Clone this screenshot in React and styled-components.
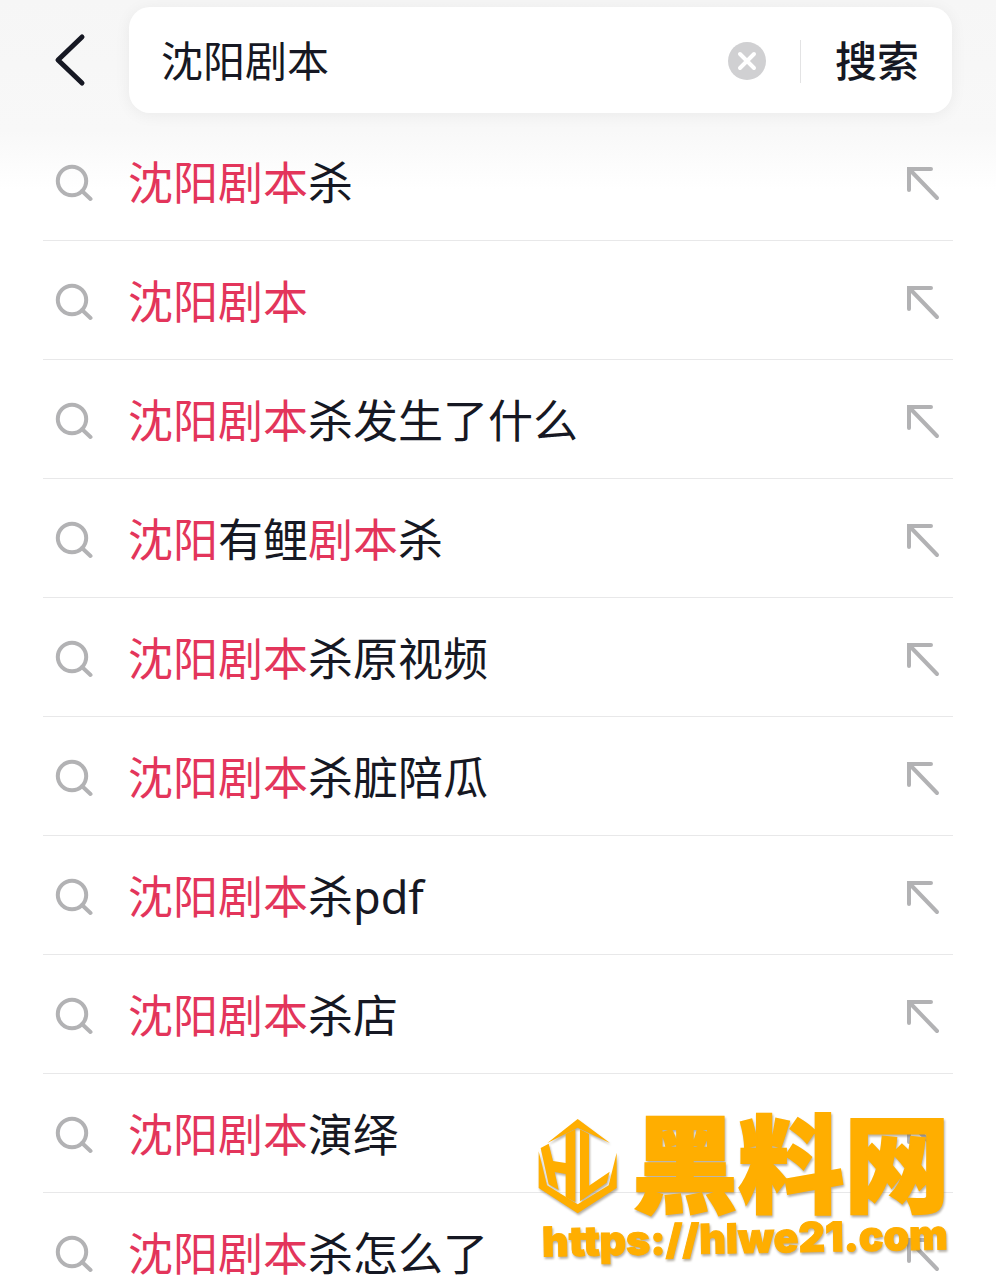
import React, {useState} from 'react';
import styled, {createGlobalStyle} from 'styled-components'

const GlobalStyle = createGlobalStyle`
    * {box-sizing: border-box}

    body {
        margin: 0;
        background: #fff;
        color: #161823;
        font-family: "Noto Sans", "Noto Sans CJK SC", sans-serif;
    }

    button, input {font-family: inherit; color: inherit}
`;

const Page = styled.div`
    position: relative;
    height: 100vh;
    overflow: hidden;
    background: linear-gradient(#f6f6f6, #f8f8f8 130px, #fff 190px);
`;

const Header = styled.header`
    display: flex;
    align-items: flex-start;
    height: 122px;
    padding: 7px 44px 0 48px;
`;

const IconButton = styled.button`
    display: flex;
    flex-shrink: 0;
    padding: 0;
    border: none;
    background: none;
    cursor: pointer;
`;

const BackButton = styled(IconButton)`
    width: 81px;
    height: 106px;
    align-items: center;
`;

const SearchBox = styled.form`
    display: flex;
    flex: 1;
    align-items: center;
    height: 106px;
    padding: 2px 33px 0 32px;
    border-radius: 21px;
    background: #fff;
    box-shadow: 0 2px 16px rgba(0, 0, 0, 0.06);
`;

const SearchInput = styled.input`
    flex: 1;
    min-width: 0;
    height: 64px;
    padding: 0 0 6px;
    border: none;
    outline: none;
    background: none;
    font-size: 42px;
`;

const Divider = styled.span`
    width: 1px;
    height: 43px;
    margin: 0 34px;
    background: #e3e3e4;
`;

const SubmitButton = styled.button`
    padding: 0;
    border: none;
    background: none;
    font-size: 42px;
    line-height: 64px;
    font-weight: 500;
    cursor: pointer;
`;

const List = styled.ul`
    margin: 0;
    padding: 0 43px;
    list-style: none;
`;

const Row = styled.li`
    display: flex;
    align-items: center;
    height: 119px;
    padding: 4px 12px 0;
    border-bottom: 1px solid #e8e8e9;
`;

const RowLink = styled.a`
    display: flex;
    flex: 1;
    align-items: center;
    gap: 35px;
    color: inherit;
    font-size: 45px;
    line-height: 56px;
    text-decoration: none;
    white-space: nowrap;
`;

const Match = styled.span`
    color: #e3355b;
`;

const Watermark = styled.a`
    position: absolute;
    right: 46px;
    bottom: 18px;
    display: flex;
    flex-direction: column;
    color: #ffae00;
    text-decoration: none;
    filter: drop-shadow(1px 2px 1px rgba(90, 80, 60, 0.45));
`;

const Brand = styled.div`
    display: flex;
    align-items: flex-start;
    gap: 14px;
    height: 96px;
`;

const BrandName = styled.span`
    font-family: "Noto Sans CJK SC", sans-serif;
    font-size: 106px;
    line-height: 80px;
    font-weight: 900;
    -webkit-text-stroke: 2px #ffae00;
    white-space: nowrap;
`;

const BrandUrl = styled.span`
    padding-left: 4px;
    font-family: Inter, sans-serif;
    font-size: 41px;
    line-height: 48px;
    font-weight: 900;
    -webkit-text-stroke: 1px #ffae00;
    white-space: nowrap;
    transform: rotate(-1deg);
`;

// matched parts are wrapped in [ ]
const suggestions = [
    '[沈阳剧本]杀',
    '[沈阳剧本]',
    '[沈阳剧本]杀发生了什么',
    '[沈阳]有鲤[剧本]杀',
    '[沈阳剧本]杀原视频',
    '[沈阳剧本]杀脏陪瓜',
    '[沈阳剧本]杀pdf',
    '[沈阳剧本]杀店',
    '[沈阳剧本]演绎',
    '[沈阳剧本]杀怎么了',
];

const BackIcon = () => (
    <svg width="44" height="56" viewBox="0 0 44 56" fill="none" stroke="#161823" strokeWidth="5" strokeLinecap="round" strokeLinejoin="round">
        <path d="M34 5L10 28L34 51"/>
    </svg>
);

const ClearIcon = () => (
    <svg width="38" height="38" viewBox="0 0 38 38">
        <circle cx="19" cy="19" r="19" fill="#d0d0d2"/>
        <path d="M12 12L26 26M26 12L12 26" stroke="#fff" strokeWidth="4" strokeLinecap="round"/>
    </svg>
);

const SearchIcon = () => (
    <svg width="38" height="38" viewBox="0 0 38 38" fill="none" stroke="#b2b2b4" strokeWidth="4">
        <circle cx="17" cy="17" r="14.2"/>
        <path d="M27 27L35.5 35" strokeLinecap="round"/>
    </svg>
);

const FillIcon = () => (
    <svg width="36" height="36" viewBox="0 0 36 36" fill="none" stroke="#b2b2b4" strokeWidth="4" strokeLinecap="round">
        <path d="M4 25V4H26M5 5L32 33"/>
    </svg>
);

const LogoIcon = () => (
    <svg width="80" height="96" viewBox="20 22 240 288" fill="#ffae00">
        <path d="M48 97L139 25L236 97L139 51Z"/>
        <path d="M28 112L52 99L65 151L103 157V70L132 56V274L103 260V190L70 184L82 238L52 221Z"/>
        <path d="M146 56L173 70V225L235 183L226 216L146 272Z"/>
        <path d="M22 122L47 224L139 281L232 224L256 126V232L139 308L22 232Z"/>
    </svg>
);

const Suggestion = ({text, onFill}) => {
    const parts = text.split(/[[\]]/);
    const plain = parts.join('');

    return(
        <Row>
            <RowLink href={`#${plain}`}>
                <SearchIcon/>
                <span>
                    {parts.map((part, i) => i % 2 ? <Match key={i}>{part}</Match> : part)}
                </span>
            </RowLink>
            <IconButton type='button' aria-label={`填入 ${plain}`} onClick={() => onFill(plain)}>
                <FillIcon/>
            </IconButton>
        </Row>
    )
};

const App = () => {
    const [query, setQuery] = useState('沈阳剧本');

    const handleSubmit = (e) => {
        e.preventDefault();
    };

    return(
        <Page>
            <GlobalStyle/>
            <Header>
                <BackButton type='button' aria-label='返回'><BackIcon/></BackButton>
                <SearchBox onSubmit={handleSubmit}>
                    <SearchInput type='text' aria-label='搜索' value={query} onChange={(e) => setQuery(e.target.value)}/>
                    <IconButton type='button' aria-label='清除' onClick={() => setQuery('')}><ClearIcon/></IconButton>
                    <Divider/>
                    <SubmitButton type='submit'>搜索</SubmitButton>
                </SearchBox>
            </Header>
            <List>
                {suggestions.map(text => <Suggestion key={text} text={text} onFill={setQuery}/>)}
            </List>
            <Watermark href='#home'>
                <Brand>
                    <LogoIcon/>
                    <BrandName>黑料网</BrandName>
                </Brand>
                <BrandUrl>https://hlwe21.com</BrandUrl>
            </Watermark>
        </Page>
    )
};

export default App
